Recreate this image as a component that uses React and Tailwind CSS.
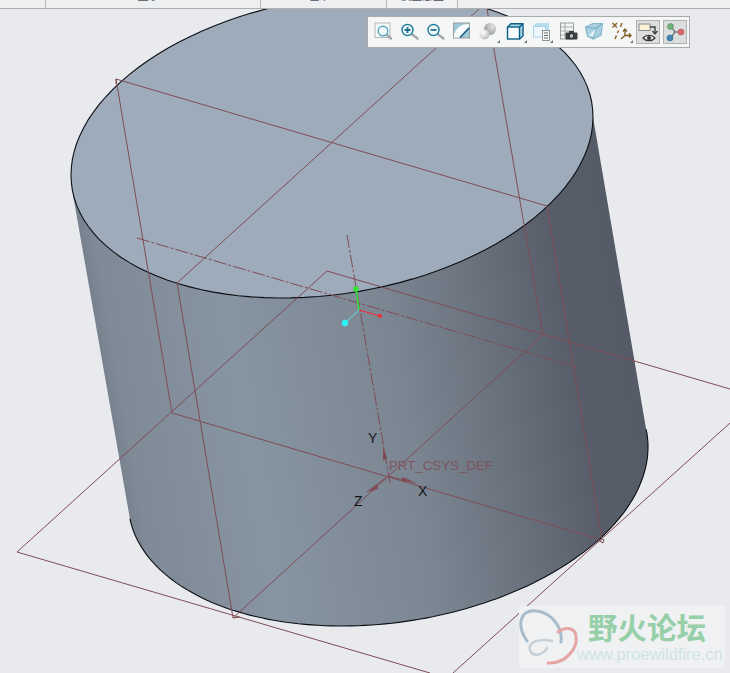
import React from "react";

// both end caps are the same ellipse, sampled: x = cx + rx cos t, y = cy + a cos t + b sin t
const ellipsePoints = (cx, cy, rx, a, b, from, to, steps = 120) => {
  const pts = [];
  for (let i = 0; i <= steps; i++) {
    const t = from + ((to - from) * i) / steps;
    pts.push(`${(cx + rx * Math.cos(t)).toFixed(1)} ${(cy + a * Math.cos(t) + b * Math.sin(t)).toFixed(1)}`);
  }
  return pts;
};

const TOP_CAP = `M${ellipsePoints(332, 146, 261, -29, 149.2, 0, Math.PI * 2).join(" L")} Z`;
const BOTTOM_ARC = ellipsePoints(388, 474, 260, -27, 149.6, -0.12, Math.PI - 0.12);
const BOTTOM_CAP = `M${BOTTOM_ARC.join(" L")}`;

const DATUM = "#7f4c55";

const DATUM_LINES = [
  // plane 1
  "M116 79 L547 206 L602 540 L172 413 Z",
  // plane 2
  "M730 389 L327 271 L17 552 L430 673",
  "M453 673 L730 423",
  // plane 3
  "M479 9 L177 283 L233 618 L543 335 L487 9",
  // corner ticks
  "M116 79 L116 84 M233 618 L240 617 M598 540 L603 543 L604 539",
];

const CylinderView = () => (
  <svg viewBox="0 9 730 664" className="block w-full h-full">
    <defs>
      <linearGradient id="body" gradientUnits="userSpaceOnUse" x1="100" y1="400" x2="637" y2="309">
        <stop offset="0" stopColor="#727d89" />
        <stop offset="0.04" stopColor="#7f8a96" />
        <stop offset="0.26" stopColor="#8794a2" />
        <stop offset="0.55" stopColor="#7b8692" />
        <stop offset="0.73" stopColor="#68707b" />
        <stop offset="0.87" stopColor="#575e69" />
        <stop offset="1" stopColor="#545b66" />
      </linearGradient>
    </defs>
    <path d={`${BOTTOM_CAP} L73 195 L593 117 Z`} fill="url(#body)" />
    <path d={BOTTOM_CAP} fill="none" stroke="#0c0e12" strokeWidth="1.1" />
    <path d={TOP_CAP} fill="#9eabbb" stroke="#0c0e12" strokeWidth="1.1" />

    {DATUM_LINES.map((d) => (
      <path key={d} d={d} fill="none" stroke={DATUM} strokeWidth="1" />
    ))}
    {/* datum axes */}
    <path d="M137 238 L580 368" fill="none" stroke={DATUM} strokeWidth="1" strokeDasharray="13 2 3 2" />
    <path d="M347 235 L390 483" fill="none" stroke={DATUM} strokeWidth="1" strokeDasharray="13 2 3 2" />

    {/* csys arrows */}
    <path d="M388 476 L416 483 M388 476 L367 492" fill="none" stroke={DATUM} strokeWidth="1" />
    <path d="M383 447 L387 458 L383 461 Z" fill={DATUM} />
    <path d="M402 477 L412 481 L402 482 Z" fill={DATUM} />
    <path d="M368 492 L377 484 L378 489 Z" fill={DATUM} />

    {/* spin center gizmo */}
    <path d="M359 310 L356 289" stroke="#35e335" strokeWidth="1.5" fill="none" />
    <circle cx="356" cy="289" r="2.8" fill="#35e335" />
    <path d="M359 310 L345 323" stroke="#5fe6ee" strokeWidth="1" fill="none" />
    <circle cx="345" cy="323" r="3.2" fill="#2cf2f5" />
    <path d="M359 310 L380 316" stroke="#f02c35" strokeWidth="1.2" fill="none" />
    <circle cx="380" cy="316" r="2" fill="#f02c35" />
  </svg>
);

const Lens = ({ cx = 8.5, cy = 9, r = 5.5, stroke = "#1f7d9c", ex = 18.5, ey = 17.5, children }) => (
  <>
    <path d={`M${cx + r * 0.7} ${cy + r * 0.7} L${ex} ${ey}`} stroke="#a2a6a8" strokeWidth="2.4" strokeLinecap="round" />
    <circle cx={cx} cy={cy} r={r} fill="#f2fafd" stroke={stroke} strokeWidth="1.4" />
    {children}
  </>
);

const Corner = () => <path d="M22 19 L22 22 L19 22 Z" fill="#6b6f72" />;

const ICONS = [
  // refit
  <>
    <rect x="3" y="2" width="15" height="14.5" fill="#f8f9f9" stroke="#b5b8ba" strokeWidth="1" />
    <Lens cx={11} cy={10} r={4.8} stroke="#5aa6bd" ex={19} ey={17.5} />
  </>,
  // zoom in
  <Lens>
    <path d="M5.5 9 H11.5 M8.5 6 V12" stroke="#1f6f92" strokeWidth="1.8" />
  </Lens>,
  // zoom out
  <Lens>
    <path d="M5.5 9 H11.5" stroke="#1f6f92" strokeWidth="1.8" />
  </Lens>,
  // repaint
  <>
    <rect x="1.5" y="2" width="16" height="15" fill="#9fc8d8" stroke="#9a9c9e" strokeWidth="1" />
    <path d="M2 13 C5 6 10 3 17 3 L17 6 L8 16.5 L2 16.5 Z" fill="#f6fbfc" />
    <path d="M8 16.5 L17 7" stroke="#14597f" strokeWidth="1.5" />
  </>,
  // display style
  <>
    <defs>
      <radialGradient id="sphereTop" cx="0.7" cy="0.3" r="0.8">
        <stop offset="0" stopColor="#e4e5e5" />
        <stop offset="1" stopColor="#8f9294" />
      </radialGradient>
      <radialGradient id="sphereLow" cx="0.35" cy="0.3" r="0.8">
        <stop offset="0" stopColor="#ffffff" />
        <stop offset="1" stopColor="#b4b6b7" />
      </radialGradient>
    </defs>
    <circle cx="12" cy="8" r="6" fill="url(#sphereTop)" />
    <circle cx="6.5" cy="13.5" r="5" fill="url(#sphereLow)" />
    <Corner />
  </>,
  // saved orientations
  <>
    <path d="M2.5 6 L6 3 H18 V15 L14.5 18 Z" fill="#a6d4e6" />
    <rect x="2.5" y="6" width="12" height="12" fill="#f7fbfd" stroke="#0f5f85" strokeWidth="1.4" />
    <path d="M2.5 6 L6 2.7 H18 V15 L14.5 18 M14.5 6 L18 2.7" fill="none" stroke="#0f5f85" strokeWidth="1.4" />
    <Corner />
  </>,
  // saved views
  <>
    <path d="M2 5 L5 2 H18 V16 H2 Z" fill="#b9dfee" />
    <rect x="2.5" y="5.5" width="12" height="10.5" fill="#eef8fc" stroke="#a6d5e8" strokeWidth="1" />
    <rect x="11.5" y="9.5" width="7" height="10" fill="#fbfbfb" stroke="#8d9295" strokeWidth="1" />
    <path d="M13 12 H17 M13 14.5 H17 M13 17 H17" stroke="#5d6265" strokeWidth="1" />
    <Corner />
  </>,
  // view manager
  <>
    <rect x="2.5" y="2" width="13" height="16" fill="#f4f5f5" stroke="#9a9d9f" strokeWidth="1" />
    <path d="M2.5 6 H15.5 M2.5 10 H15.5 M2.5 14 H15.5 M7 2 V18" stroke="#a8abad" strokeWidth="1" />
    <rect x="7.5" y="11.5" width="12" height="7" rx="1" fill="#3c3e40" />
    <rect x="11" y="10" width="5" height="2" fill="#3c3e40" />
    <circle cx="13.5" cy="15" r="2.4" fill="#bfc3c5" stroke="#1d1f20" strokeWidth="1" />
  </>,
  // perspective
  <>
    <path d="M1.5 6 L9 2.5 H18.5 L17 14 L9 18 L3.5 15 Z" fill="#abd1e0" stroke="#86b8cd" strokeWidth="1.2" />
    <path d="M1.5 6 L12 7.5 L18.5 2.5 M12 7.5 L9 18" fill="none" stroke="#79b0c7" strokeWidth="1.2" />
    <path d="M4.5 14.5 L11.5 8 L9.5 15.5 Z" fill="#e4f2f7" />
  </>,
  // datum display
  <>
    <path d="M1.5 2 L6 6.5 M6 2 L1.5 6.5 M11 2 L9.5 6 M7.5 9.5 L6.5 12 M5.5 14.5 L4 18" fill="none" stroke="#8a6a2c" strokeWidth="1.5" />
    <path d="M14 8 V14.5 H20 M12 10.5 L14 8 L16 10.5 M18 12.5 L20 14.5 L18 16.5 M14 14.5 L10 18" fill="none" stroke="#7a5c24" strokeWidth="1.3" />
    <Corner />
  </>,
];

const ToolButton = ({ children }) => (
  <div className="w-[26.5px] h-7 flex items-center justify-center">
    <svg viewBox="0 0 22 22" className="w-[22px] h-[22px]">
      {children}
    </svg>
  </div>
);

const ToggleButton = ({ children }) => (
  <div className="w-[26.5px] h-7 flex items-center justify-center">
    <div className="w-6 h-6 flex items-center justify-center bg-[#dcdddd] border border-[#b0b2b3]">
      <svg viewBox="0 0 22 22" className="w-[22px] h-[22px]">
        {children}
      </svg>
    </div>
  </div>
);

const ViewToolbar = () => (
  <div className="absolute top-[7px] left-[367px] w-[323px] h-8 pl-0.5 flex items-center bg-[#f5f6f6] border border-[#a9abac]">
    {ICONS.map((icon, i) => (
      <ToolButton key={i}>{icon}</ToolButton>
    ))}
    <ToggleButton>
      <rect x="2" y="3" width="11" height="6.5" fill="#fbf3d6" stroke="#8b8d8f" strokeWidth="1" />
      <path d="M13 6 H18 V12 M15.5 10 L18 13 L20.5 10" fill="none" stroke="#3f4244" strokeWidth="1.4" />
      <path d="M6 17 C9 13.5 15 13.5 18 17 C15 20.5 9 20.5 6 17 Z" fill="#f3f3f3" stroke="#343638" strokeWidth="1.2" />
      <circle cx="12" cy="17" r="2" fill="#343638" />
    </ToggleButton>
    <ToggleButton>
      <path d="M7 5.5 L11 11 L17 11 M11 11 L6.5 17" fill="none" stroke="#54585a" strokeWidth="1.2" />
      <circle cx="6.5" cy="5.5" r="3" fill="#72b07a" stroke="#4f8f5b" strokeWidth="0.6" />
      <circle cx="17" cy="11" r="3" fill="#d9696b" stroke="#b44f52" strokeWidth="0.6" />
      <circle cx="6" cy="17" r="3" fill="#3f86ae" stroke="#2d6a8e" strokeWidth="0.6" />
    </ToggleButton>
  </div>
);

const Watermark = () => (
  <div className="absolute left-[519px] top-[597px] w-[206px] h-[62px] bg-[#eff1f3]">
    <svg viewBox="519 606 206 62" className="absolute inset-0 w-full h-full">
      <path d="M527 641 C516 625 520 609 537 611 C552 613 563 628 561 642" fill="none" stroke="#a9bccb" strokeWidth="3" strokeLinecap="round" />
      <path d="M548 663 C566 664 578 648 576 636 C575 628 566 626 558 632" fill="none" stroke="#e6a5a5" strokeWidth="3" strokeLinecap="round" />
      <path d="M552 641 C540 638 527 642 530 650 C533 658 543 655 547 648" fill="none" stroke="#c5d0d8" strokeWidth="2.5" strokeLinecap="round" />
    </svg>
    <span className="absolute left-[69px] top-[2px] text-[29.5px] leading-9 font-bold text-[#96cfa8] whitespace-nowrap font-['Noto_Sans_CJK_SC',sans-serif]">
      野火论坛
    </span>
    <span className="absolute left-[58px] top-[36px] text-[16.5px] leading-6 text-[#cfe3e6] whitespace-nowrap font-['Liberation_Sans',sans-serif]">
      www.proewildfire.cn
    </span>
  </div>
);

const App = () => {
  return (
    <div className="w-[730px] h-[673px] flex flex-col overflow-hidden bg-[#e8eaee] font-['Liberation_Sans',sans-serif]">
      {/* ribbon group labels, only their lower edge is in frame */}
      <div className="h-[9px] shrink-0 flex overflow-hidden bg-[#eeeff1] border-b border-[#adafb0] text-[11px] leading-[14px] text-[#4a4f5c] font-['Noto_Sans_CJK_SC',sans-serif]">
        <div className="w-[46px] border-r border-[#b5b7b8]" />
        <div className="w-[215px] border-r border-[#b5b7b8] flex justify-center">
          <span className="-mt-[12px] mr-[9px]">显示</span>
        </div>
        <div className="w-[126px] border-r border-[#b5b7b8] flex justify-center">
          <span className="-mt-[12px] -ml-[7px]">基准</span>
        </div>
        <div className="w-[71px] border-r border-[#b5b7b8] flex justify-center bg-[#f1f2f3]">
          <span className="-mt-[12px]">模型意图</span>
        </div>
      </div>

      <div className="relative flex-1">
        <CylinderView />
        <span className="absolute left-[389px] top-[449px] text-[13.3px] leading-4 text-[#7f4c55]/85">PRT_CSYS_DEF</span>
        <span className="absolute left-[368px] top-[421px] text-sm leading-4 text-[#14161a]">Y</span>
        <span className="absolute left-[418px] top-[474px] text-sm leading-4 text-[#14161a]">X</span>
        <span className="absolute left-[354px] top-[484px] text-sm leading-4 text-[#14161a]">Z</span>
        <ViewToolbar />
        <Watermark />
      </div>
    </div>
  );
};

export default App;
